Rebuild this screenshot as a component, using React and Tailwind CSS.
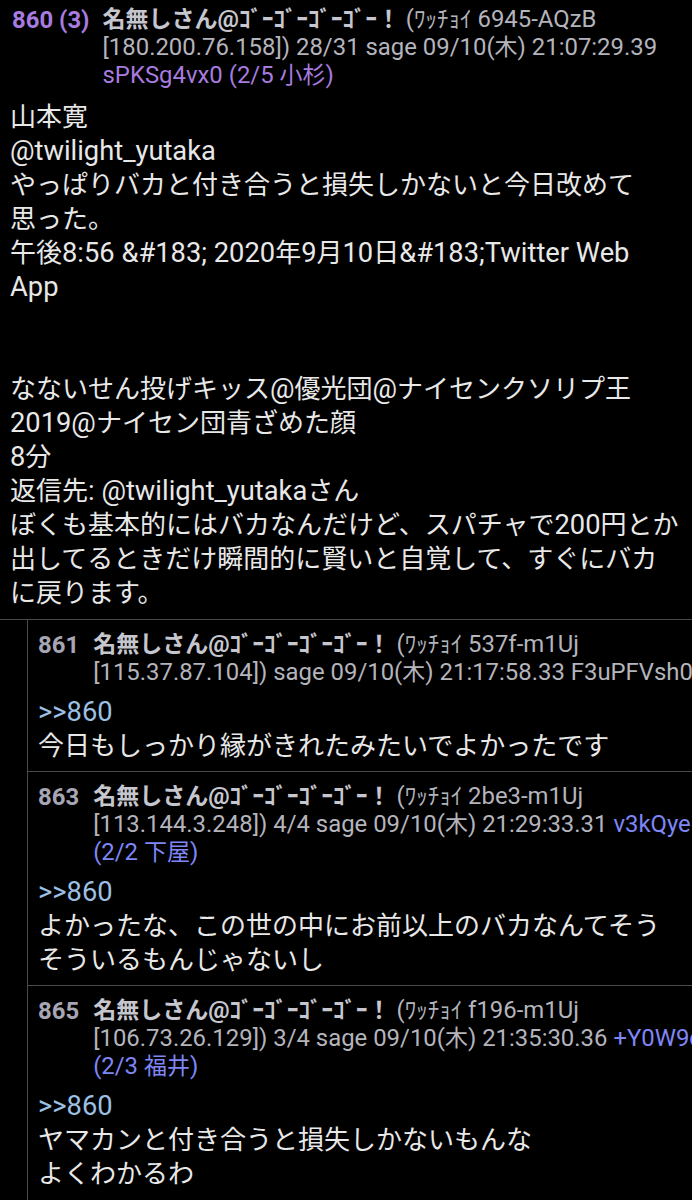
import React from "react";

const GRAY = "text-[#b4b4bc]";
const NAME = "名無しさん@ｺﾞｰｺﾞｰｺﾞｰｺﾞｰ！";
const CJK = /([\u3000-\u30ff\u3400-\u9fff\uff00-\uffef]+)/;

// Latin runs are drawn a touch larger, as in the reference rendering
function T({ children, big }) {
  const parts = String(children).split(CJK);
  return (
    <>
      {parts.map((p, i) =>
        p === "" ? null : CJK.test(p) ? (
          <span key={i}>{p}</span>
        ) : (
          <span key={i} className={big ? "text-[27.3px] leading-none" : "text-[23.9px] leading-none"}>
            {p}
          </span>
        )
      )}
    </>
  );
}

function ReplyHeader({ num, wacchoi, line2, id, idBlue, line3 }) {
  return (
    <div className="flex text-[23px] leading-[28px] whitespace-nowrap">
      <span className="font-bold text-[#a6a6b4] mr-[14px] text-[23.9px] h-[28px]">{num}</span>
      <div className="flex flex-col">
        <div className="h-[28px]">
          <span className="font-bold text-[#c6c6ce]"><T>{NAME}</T></span>
          <span className={GRAY}><T>{` (ﾜｯﾁｮｲ ${wacchoi}`}</T></span>
        </div>
        <div className={`h-[28px] ${GRAY}`}>
          <T>{line2 + " "}</T>
          <span className={idBlue ? "text-[#7f86f5]" : GRAY}><T>{id}</T></span>
        </div>
        {line3 && (
          <div className="h-[28px] text-[#7f86f5]"><T>{line3}</T></div>
        )}
      </div>
    </div>
  );
}

function Reply({ first, header, body }) {
  return (
    <div className={`pt-[11px] pb-[8px] pl-[10px] ${first ? "" : "border-t border-[#4a4a4a]"}`}>
      <ReplyHeader {...header} />
      <div className="mt-[8px] text-[26px] leading-[34px] whitespace-nowrap">
        <div className="h-[34px] text-[#9cc0e4]"><T big>{">>860"}</T></div>
        {body.map((l, i) => (
          <div key={i} className="h-[34px] text-[#e8e8e8]"><T big>{l}</T></div>
        ))}
      </div>
    </div>
  );
}

export default function App() {
  const mainBody = [
    "山本寛",
    "@twilight_yutaka",
    "やっぱりバカと付き合うと損失しかないと今日改めて",
    "思った。",
    "午後8:56 &#183; 2020年9月10日&#183;Twitter Web",
    "App",
    "",
    "",
    "なないせん投げキッス@優光団@ナイセンクソリプ王",
    "2019@ナイセン団青ざめた顔",
    "8分",
    "返信先: @twilight_yutakaさん",
    "ぼくも基本的にはバカなんだけど、スパチャで200円とか",
    "出してるときだけ瞬間的に賢いと自覚して、すぐにバカ",
    "に戻ります。",
  ];

  return (
    <div className="w-[692px] min-h-[1200px] overflow-hidden bg-black font-[Roboto,'Noto_Sans_CJK_JP',sans-serif]">
      <div className="pt-[6px] pl-[10px] pb-[9px]">
        <div className="flex text-[23px] leading-[28px] whitespace-nowrap">
          <span className="font-bold text-[#a77bdf] mr-[13px] pl-[2px] text-[23.9px] h-[28px]">860 (3)</span>
          <div className="flex flex-col">
            <div className="h-[28px]">
              <span className="font-bold text-[#c6c6ce]"><T>{NAME}</T></span>
              <span className={GRAY}><T>{" (ﾜｯﾁｮｲ 6945-AQzB"}</T></span>
            </div>
            <div className={`h-[28px] ${GRAY}`}><T>{"[180.200.76.158]) 28/31 sage 09/10(木) 21:07:29.39"}</T></div>
            <div className="h-[28px] text-[#a77bdf]"><T>{"sPKSg4vx0 (2/5 小杉)"}</T></div>
          </div>
        </div>
        <div className="mt-[10px] text-[26px] leading-[34px] text-[#e8e8e8] whitespace-nowrap">
          {mainBody.map((l, i) =>
            l ? (
              <div key={i} className="h-[34px]"><T big>{l}</T></div>
            ) : (
              <div key={i} className="h-[34px]" />
            )
          )}
        </div>
      </div>
      <div className="border-t border-[#4a4a4a]">
        <div className="ml-[27px] border-l border-[#4a4a4a] min-h-[581px]">
          <Reply
            first
            header={{
              num: "861",
              wacchoi: "537f-m1Uj",
              line2: "[115.37.87.104]) sage 09/10(木) 21:17:58.33",
              id: "F3uPFVsh0",
              idBlue: false,
            }}
            body={["今日もしっかり縁がきれたみたいでよかったです"]}
          />
          <Reply
            header={{
              num: "863",
              wacchoi: "2be3-m1Uj",
              line2: "[113.144.3.248]) 4/4 sage 09/10(木) 21:29:33.31",
              id: "v3kQye",
              idBlue: true,
              line3: "(2/2 下屋)",
            }}
            body={[
              "よかったな、この世の中にお前以上のバカなんてそう",
              "そういるもんじゃないし",
            ]}
          />
          <Reply
            header={{
              num: "865",
              wacchoi: "f196-m1Uj",
              line2: "[106.73.26.129]) 3/4 sage 09/10(木) 21:35:30.36",
              id: "+Y0W9c",
              idBlue: true,
              line3: "(2/3 福井)",
            }}
            body={["ヤマカンと付き合うと損失しかないもんな", "よくわかるわ"]}
          />
        </div>
      </div>
    </div>
  );
}
